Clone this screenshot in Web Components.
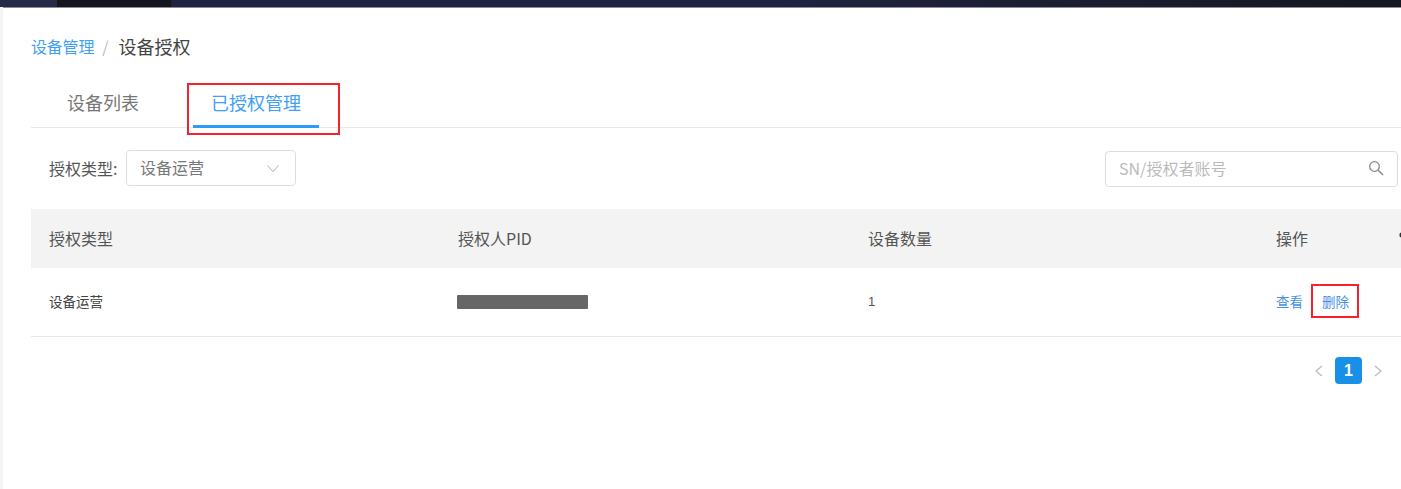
<!DOCTYPE html>
<html lang="zh"><head><meta charset="utf-8"><title>设备授权</title>
<style>
html,body{margin:0;height:489px;overflow:hidden;background:#fff}
body{font-family:"Noto Sans CJK SC","Noto Sans",sans-serif;color:#555}
</style></head><body>
<app-shell>
  <top-bar slot="top"></top-bar>
  <bread-crumb></bread-crumb>
  <tab-bar></tab-bar>
  <filter-bar></filter-bar>
  <auth-table></auth-table>
  <page-nav></page-nav>
</app-shell>
<script>
function def(name, html){
  customElements.define(name, class extends HTMLElement{
    constructor(){super();this.attachShadow({mode:'open'}).innerHTML=html;}
  });
}
def('app-shell',`<style>
:host{display:flex;flex-direction:column;width:1401px;height:489px;overflow:hidden}
.body{flex:1;display:flex;min-height:0}
.strip{width:3px;background:#f5f5f5;flex:none}
.main{flex:1;min-width:0;padding-left:28px;display:flex;flex-direction:column}
</style><slot name="top"></slot><div class="body"><div class="strip"></div><div class="main"><slot></slot></div></div>`);
def('top-bar',`<style>
:host{display:flex;height:7px;background:#171b2e;box-shadow:0 1px 0 #8a8c96}
i{display:block;height:100%}
</style><i style="width:57px;background:#262a48"></i><i style="width:114px;background:#15151f"></i><i style="flex:1;background:linear-gradient(90deg,#20233f 0,#20233f 50%,#141820 100%)"></i>`);
def('bread-crumb',`<style>
:host{display:flex;align-items:center;height:26px;margin-top:26px;line-height:26px;white-space:nowrap}
a{font-size:16px;color:#3fa0f5;letter-spacing:-.2px}
s{text-decoration:none;font-size:16px;color:#bbb;margin:0 10px 0 8px}
b{font-weight:400;font-size:18px;color:#444}
</style><a>设备管理</a><s>/</s><b>设备授权</b>`);
def('tab-bar',`<style>
:host{display:flex;position:relative;height:47px;margin-top:21px;border-bottom:1px solid #e8e8e8;box-sizing:content-box}
.t{font-size:18px;line-height:44px;height:47px;box-sizing:border-box;white-space:nowrap}
.a{margin-left:54px;padding:0 18px;width:126px;height:48px;color:#3fa0f5;border-bottom:3px solid #2d9cf8;position:relative}
.n{margin-left:36px;color:#777;}
.mark{position:absolute;left:156px;top:3px;width:153px;height:52px;box-sizing:border-box;border:2px solid #f5222d}
</style><div class="t n">设备列表</div><div class="t a">已授权管理</div><div class="mark"></div>`);
def('filter-bar',`<style>
:host{display:flex;align-items:flex-start;margin-top:22px;height:59px;padding-left:18px;width:1349px;white-space:nowrap}
label{font-size:16px;line-height:36px;color:#555;width:77px}
.sel{width:170px;height:36px;box-sizing:border-box;border:1px solid #ddd;border-radius:4px;display:flex;align-items:center;padding:0 13px;justify-content:space-between;font-size:16px;color:#777}
.q{margin-left:auto;margin-top:1px;width:293px;height:36px;box-sizing:border-box;border:1px solid #ddd;border-radius:4px;display:flex;align-items:center;padding:0 13px;justify-content:space-between;font-size:16px;color:#bbb}
svg{display:block;flex:none}
.q span,.sel span{position:relative;top:-1px}
</style><label>授权类型:</label>
<div class="sel"><span>设备运营</span><svg width="14" height="9" viewBox="0 0 14 9" style="margin-right:2px"><path d="M1.5 1.5 7 7.5l5.5-6" fill="none" stroke="#bbb" stroke-width="1.1"/></svg></div>
<div class="q"><span>SN/授权者账号</span><svg width="16" height="16" viewBox="0 0 16 16" style="margin-top:-3px"><circle cx="6.5" cy="6.5" r="4.8" fill="none" stroke="#888" stroke-width="1.3"/><path d="M10 10l5 5" stroke="#888" stroke-width="1.4" fill="none"/></svg></div>`);
def('auth-table',`<style>
:host{display:block;width:1400px;position:relative}
.r{display:grid;grid-template-columns:409px 410px 408px 1fr}
.r>div{padding:0 0 2px 18px;display:flex;align-items:center;white-space:nowrap}
.h{height:59px;background:#f3f3f3;font-size:16px;color:#555}
.b{border-bottom:1px solid #e8e8e8;font-size:13.5px;color:#444;box-sizing:border-box;height:69px}
.mask{display:block;width:131px;height:14px;background:#666;margin-left:-1px;border-radius:1px;position:relative;top:1px}
a{color:#4a90e2;font-size:13.5px}
a+a{margin-left:19px}
.one{font-family:'Liberation Sans',sans-serif;font-size:13px;color:#555}
.mark{position:absolute;left:1280px;top:75px;width:48px;height:34px;box-sizing:border-box;border:2px solid #f5222d}
.gear{position:absolute;left:1367px;top:22px}
</style>
<div class="r h"><div>授权类型</div><div>授权人PID</div><div>设备数量</div><div>操作</div></div>
<div class="r b"><div>设备运营</div><div><span class="mask"></span></div><div class="one">1</div><div><a>查看</a><a>删除</a></div></div>
<svg class="gear" width="8" height="8" viewBox="0 0 8 8"><circle cx="4" cy="4" r="2.6" fill="#333"/></svg>
<div class="mark"></div>`);
def('page-nav',`<style>
:host{display:flex;align-items:center;justify-content:flex-end;width:1351px;margin-top:20px;height:27px}
.c{width:27px;height:27px;border-radius:4px;background:#1890e8;color:#fff;font:700 16px/27px "Liberation Sans",sans-serif;text-align:center;margin:0 11px 0 11px}
svg{display:block}
</style><svg width="10" height="12" viewBox="0 0 10 12"><path d="M8 1 2 6l6 5" fill="none" stroke="#bbb" stroke-width="1.2"/></svg><div class="c">1</div><svg width="10" height="12" viewBox="0 0 10 12" style="margin-right:-1px"><path d="M2 1l6 5-6 5" fill="none" stroke="#bbb" stroke-width="1.2"/></svg>`);
</script>
</body></html>
